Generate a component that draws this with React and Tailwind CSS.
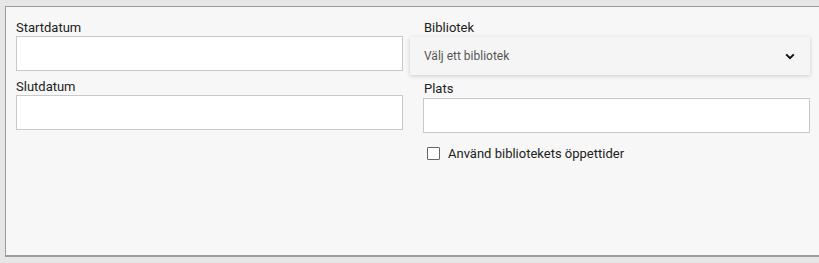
export default function App() {
  return (
    <div className="w-[819px] h-[263px] bg-[#e6e6e6] overflow-hidden pt-[6px] pl-[5px] font-['Roboto',sans-serif] text-[13px] text-[#222]">
      <div className="w-[830px] h-[251px] bg-[#f7f7f7] border border-b-2 border-[#9c9c9c] pl-[10px] pt-[12px] flex">
        {/* left column */}
        <div className="w-[387px] flex flex-col">
          <label className="leading-[17px] h-[17px]">Startdatum</label>
          <input className="h-[35px] bg-white border border-[#c9c9c9]" />
          <label className="leading-[17px] h-[17px] mt-[7px]">Slutdatum</label>
          <input className="h-[35px] bg-white border border-[#c9c9c9]" />
        </div>

        {/* right column */}
        <div className="ml-[7px] w-[400px] flex flex-col">
          <label className="leading-[17px] h-[17px] pl-[14px]">Bibliotek</label>
          <button className="mt-[1px] h-[38px] bg-[#f5f5f5] shadow-[0_1px_4px_rgba(0,0,0,0.18)] flex items-center justify-between pl-[14px] pr-[15px] text-[12px] text-[#555]">
            <span>Välj ett bibliotek</span>
            <svg width="10" height="7" viewBox="0 0 10 7" fill="none">
              <path d="M1.2 1.4 L5 5.2 L8.8 1.4" stroke="#111" strokeWidth="2" />
            </svg>
          </button>
          <label className="leading-[17px] h-[17px] mt-[5px] pl-[14px]">Plats</label>
          <input className="ml-[13px] mt-[1px] h-[35px] bg-white border border-[#c9c9c9]" />
          <label className="flex items-center gap-[8px] ml-[17px] mt-[11px]">
            <span className="w-[13px] h-[13px] bg-white border border-[#666] rounded-[1px]" />
            <span>Använd bibliotekets öppettider</span>
          </label>
        </div>
      </div>
    </div>
  );
}
